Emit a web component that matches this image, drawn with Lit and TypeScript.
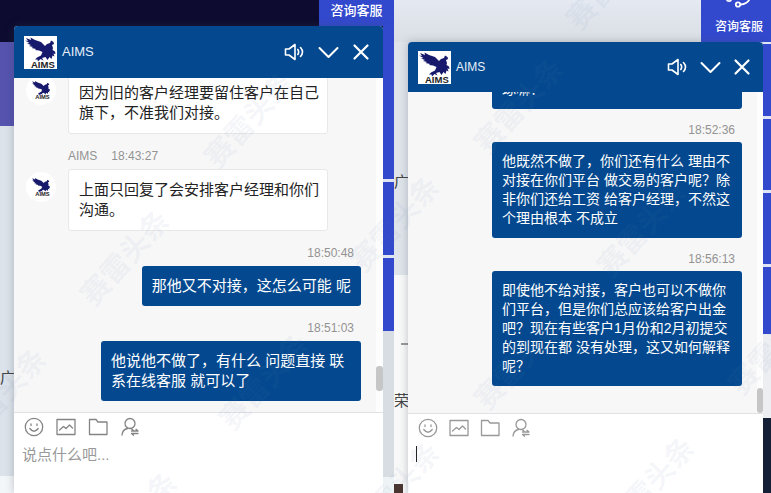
import { LitElement, html, css, svg, nothing } from "lit";
import { customElement, property } from "lit/decorators.js";
import { classMap } from "lit/directives/class-map.js";

interface Message {
  from: "agent" | "visitor";
  text: string;
  time?: string;
}

const leftChat: Message[] = [
  { from: "agent", text: "因为旧的客户经理要留住客户在自己\n旗下，不准我们对接。" },
  { from: "agent", time: "18:43:27", text: "上面只回复了会安排客户经理和你们\n沟通。" },
  { from: "visitor", time: "18:50:48", text: "那他又不对接，这怎么可能 呢" },
  { from: "visitor", time: "18:51:03", text: "他说他不做了，有什么 问题直接 联\n系在线客服 就可以了" },
];

const rightChat: Message[] = [
  { from: "visitor", text: "琢嘛！" },
  {
    from: "visitor",
    time: "18:52:36",
    text: "他既然不做了，你们还有什么 理由不\n对接在你们平台 做交易的客户呢？除\n非你们还给工资 给客户经理，不然这\n个理由根本 不成立",
  },
  {
    from: "visitor",
    time: "18:56:13",
    text: "即使他不给对接，客户也可以不做你\n们平台，但是你们总应该给客户出金\n吧？现在有些客户1月份和2月初提交\n的到现在都 没有处理，这又如何解释\n呢？",
  },
];

/* Watermark centres as percentages of the page. */
const marks: [number, number][] = [
  [16, 52], [32, 24], [0, 80], [17, 105], [34, 77], [51, 45], [67, 21],
  [83, 46], [67, 73], [84, 98], [100, 70], [79, -4], [51, 99],
];

const logo = svg`
  <rect width="33" height="33" fill="#fff"/>
  <path fill="#171a6c" d="M1 4.500 4 5 2 2 7 4 6.500 1.500 11 4 17 6 21 10 23 8 26 7 27 4.500 29.500 6 30 8 28 9 29 12 28.500 14 31 15.500 31.500 18 29.500 17.500 30.500 20.500 28.500 19.500 27.500 23 25.500 21 23.500 24 21.500 21 18 22 19.500 24.500 16.500 23 14 25.500 13.500 23.500 11 23.500 13 21.500 17 19.500 18.500 16 15 14.500 11 14 12 13 7.500 12 9 11 5 10 7 9 3 7.500 5.500 7Z"/>
  <text x="7" y="32" font-family="Liberation Sans, sans-serif" font-weight="700" font-size="9.500" fill="#222">AIMS</text>`;

@customElement("chat-window")
export class ChatWindow extends LitElement {
  @property({ attribute: false }) messages: Message[] = [];
  @property({ type: Boolean, reflect: true }) compact = false;
  @property({ type: Boolean }) typing = false;

  static styles = css`
    :host {
      display: flex;
      flex-direction: column;
      min-width: 0;
      min-height: 0;
      font: 15px/20px "Liberation Sans", "Noto Sans CJK SC", sans-serif;
      color: #222;
      background: #fff;
      border-radius: 4px 4px 0 0;
      overflow: hidden;
      box-shadow: 0 0 8px rgba(60, 70, 90, 0.3);
    }
    :host([compact]) { font-size: 14px; line-height: 19px; }
    svg { display: block; fill: none; stroke-linecap: round; stroke-linejoin: round; }
    button {
      display: block;
      padding: 0;
      border: 0;
      background: none;
      color: inherit;
      font: inherit;
    }
    .header {
      flex: none;
      display: flex;
      align-items: center;
      box-sizing: border-box;
      height: 52px;
      padding: 0 13px 0 10px;
      background: #04498f;
      color: #fff;
    }
    :host([compact]) .header { height: 50px; padding-right: 12px; }
    .name { margin: 0 auto 0 5px; font-size: 13px; font-weight: 400; color: #e6effa; }
    :host([compact]) .name { font-size: 12px; }
    .tools { display: flex; align-items: center; gap: 13px; }
    :host([compact]) .tools { gap: 12px; }
    .body { flex: 1; min-height: 0; display: flex; background: #f7f7f7; }
    .list {
      flex: 1;
      min-width: 0;
      display: flex;
      flex-direction: column;
      justify-content: flex-end;
      overflow: hidden;
      padding: 0 15px 11px 12px;
    }
    :host([compact]) .list { padding-bottom: 27px; }
    .track {
      flex: none;
      width: 7px;
      display: flex;
      flex-direction: column;
      justify-content: flex-end;
      background: #fdfdfd;
      padding-bottom: 21px;
    }
    :host([compact]) .track { padding-bottom: 0; width: 6px; }
    .thumb { height: 25px; border-radius: 3px; background: #c6c6c6; }
    .message {
      flex: none;
      display: grid;
      grid-template-columns: 30px 1fr;
      column-gap: 12px;
      justify-items: start;
    }
    .message.visitor { display: flex; flex-direction: column; align-items: flex-end; }
    .stamp {
      grid-column: 2;
      display: flex;
      gap: 14px;
      padding: 14px 0 5px;
      font-size: 12px;
      line-height: 16px;
      color: #939393;
    }
    :host([compact]) .stamp { padding: 13px 0 4px; }
    .visitor .stamp,
    :host([compact]) .visitor .stamp { padding-right: 7px; }
    .avatar {
      grid-column: 1;
      box-sizing: border-box;
      width: 30px;
      height: 30px;
      margin-top: 3px;
      padding: 5px;
      border-radius: 50%;
      background: #fff;
    }
    .bubble {
      grid-column: 2;
      box-sizing: border-box;
      margin: 0;
      padding: 10px;
      border-radius: 3px;
      white-space: pre-wrap;
    }
    .agent .bubble { padding-right: 8px; background: #fff; border: 1px solid #e8e8e8; }
    .visitor .bubble { background: #04498f; color: #fff; }
    .bubble.wide { width: 260px; }
    :host([compact]) .bubble { width: 250px; }
    .footer {
      flex: none;
      box-sizing: border-box;
      height: 81px;
      padding: 4px 8px 0;
      border-top: 1px solid #dfe1e4;
    }
    :host([compact]) .footer { height: 80px; }
    .actions { display: flex; align-items: center; gap: 12px; padding: 0 2px; color: #848484; }
    :host([compact]) .actions { gap: 11px; color: #999; }
    .entry { display: flex; padding-top: 8px; }
    .caret { width: 1px; height: 16px; background: #222; }
    textarea {
      flex: 1;
      min-width: 0;
      height: 24px;
      padding: 0;
      border: 0;
      outline: 0;
      resize: none;
      background: none;
      color: #222;
      font: inherit;
    }
    textarea::placeholder { color: #999; }
  `;

  private bubble(m: Message) {
    const agent = m.from === "agent";
    return html`
      <div class=${classMap({ message: true, agent, visitor: !agent })}>
        ${m.time
          ? html`<div class="stamp">${agent ? html`<span>AIMS</span>` : nothing}<time>${m.time}</time></div>`
          : nothing}
        ${agent
          ? html`<div class="avatar"><svg viewBox="0 0 33 33" width="20" height="20" role="img" aria-label="AIMS">${logo}</svg></div>`
          : nothing}
        <p class=${classMap({ bubble: true, wide: m.text.includes("\n") })}>${m.text}</p>
      </div>`;
  }

  render() {
    return html`
      <header class="header">
        <svg viewBox="0 0 33 33" width="33" height="33" role="img" aria-label="AIMS">${logo}</svg>
        <h2 class="name">AIMS</h2>
        <div class="tools">
          <button aria-label="声音">
            <svg width="21" height="20" viewBox="0 0 21 20" stroke="currentColor" stroke-width="1.6">
              <path d="M1.500 7H5L11 2.500V17.500L5 13H1.500Z"/>
              <path d="M13.800 7.500Q15.500 10 13.800 12.500M16.500 5.500Q20.500 10 16.500 14.500"/>
            </svg>
          </button>
          <button aria-label="最小化">
            <svg width="21" height="20" viewBox="0 0 21 20" stroke="currentColor" stroke-width="2">
              <path d="M1.500 6 10.500 15 19.500 6"/>
            </svg>
          </button>
          <button aria-label="关闭">
            <svg width="18" height="20" viewBox="0 0 18 20" stroke="currentColor" stroke-width="2.200">
              <path d="M2.500 3.500 15.500 16.500M15.500 3.500 2.500 16.500"/>
            </svg>
          </button>
        </div>
      </header>
      <div class="body">
        <div class="list">${this.messages.map((m) => this.bubble(m))}</div>
        <div class="track"><div class="thumb"></div></div>
      </div>
      <footer class="footer">
        <div class="actions">
          <button aria-label="表情">
            <svg width="20" height="20" viewBox="0 0 20 20" stroke="currentColor" stroke-width="1.300">
              <circle cx="10" cy="10" r="8.700"/>
              <path d="M5.800 11.500Q10 17 14.200 11.500M7 7V8.500M13 7V8.500"/>
            </svg>
          </button>
          <button aria-label="图片">
            <svg width="20" height="20" viewBox="0 0 20 20" stroke="currentColor" stroke-width="1.300">
              <rect x="1" y="2.500" width="18" height="15"/>
              <path d="M3.500 13 7.500 9.500 10 11.500 13.500 8 16.500 11"/>
            </svg>
          </button>
          <button aria-label="文件">
            <svg width="20" height="20" viewBox="0 0 20 20" stroke="currentColor" stroke-width="1.300">
              <path d="M1.500 17.500V2.500H8L10 5H19V17.500Z"/>
            </svg>
          </button>
          <button aria-label="转人工">
            <svg width="20" height="20" viewBox="0 0 20 20" stroke="currentColor" stroke-width="1.300">
              <circle cx="10" cy="6.500" r="5"/>
              <path d="M2 18Q2.500 12.500 7.500 11.500M11 11.500 13 13M11.500 14H18L16 12.300M18 16.500H11.500L13.500 18.200"/>
            </svg>
          </button>
        </div>
        <div class="entry">
          ${this.typing ? html`<span class="caret"></span>` : nothing}
          <textarea aria-label="消息" placeholder=${this.typing ? "" : "说点什么吧..."}></textarea>
        </div>
      </footer>`;
  }
}

@customElement("app-root")
export class AppRoot extends LitElement {
  static styles = css`
    :host {
      display: grid;
      grid-template-columns: 394fr 377fr;
      height: 100vh;
      position: relative;
      overflow: hidden;
      font: 15px/20px "Liberation Sans", "Noto Sans CJK SC", sans-serif;
      color: #444;
    }
    .scene { display: grid; min-width: 0; min-height: 0; }
    .first {
      grid-template: 26px minmax(0, 1fr) / 14px minmax(0, 1fr) 11px;
      background: #0d0c30;
    }
    .second {
      grid-template: 42px minmax(0, 1fr) / 14px minmax(0, 1fr) 8px;
      background: linear-gradient(#e4e9f2, #dadfe5 42px);
    }
    .consult {
      grid-column: 2 / -1;
      justify-self: end;
      display: flex;
      flex-direction: column;
      align-items: center;
      justify-content: flex-end;
      box-sizing: border-box;
      width: 75px;
      padding: 0 0 6px;
      border: 0;
      background: #3349cd;
      color: #fff;
      font: 500 13px/20px "Noto Sans CJK SC", sans-serif;
      overflow: hidden;
    }
    .second .consult { width: 70px; font-size: 12px; padding-left: 6px; }
    .consult svg { flex: none; display: block; margin-bottom: 8px; }
    .edge { display: flex; flex-direction: column; justify-content: flex-end; overflow: hidden; }
    .first .left {
      justify-content: flex-start;
      background: linear-gradient(#0d0c30 16px, #5553ae 16px 100px, #dce2e9 100px 450px, #f3f6f8 450px);
    }
    .second .left {
      justify-content: flex-start;
      background: linear-gradient(#dfe4ea 233px, #f8f8f8 233px);
    }
    .glyph { height: 20px; overflow: hidden; }
    .first .glyph { margin-top: 342px; }
    .top { margin-top: 130px; height: 18px; }
    .dash { width: 7px; height: 2px; margin: 153px 0 0 7px; background: #999; }
    .honor { margin-top: 46px; }
    .photo { width: 9px; height: 9px; margin-top: auto; background: #49342f; }
    .rail {
      display: grid;
      align-content: start;
      gap: 3px;
    }
    .rail a { background: #3349cd; }
    .first .rail {
      grid-template-rows: 153px 73px 73px;
      background: linear-gradient(#dfe5f1 304px, #d8dde3 304px 451px, #eef4f6 451px);
    }
    .second .rail {
      grid-template-rows: 72px 71px 71px 67px;
      padding-top: 2px;
      background: linear-gradient(#dfe4f7 292px, #eceef1 292px 376px, #151f35 376px);
    }
    .mark {
      position: absolute;
      transform: translate(-50%, -50%) rotate(-48deg);
      font: 700 29px/32px "Noto Sans CJK SC", sans-serif;
      color: rgba(95, 125, 170, 0.08);
      white-space: nowrap;
      pointer-events: none;
    }
  `;

  render() {
    return html`
      <section class="scene first">
        <button class="consult">咨询客服</button>
        <div class="edge left"><div class="glyph">广</div></div>
        <chat-window .messages=${leftChat}></chat-window>
        <nav class="rail" aria-label="侧栏"><a href="#a"></a><a href="#b"></a><a href="#c"></a></nav>
      </section>
      <section class="scene second">
        <button class="consult">
          <svg width="28" height="18" viewBox="0 0 28 18" fill="none" stroke="#fff" stroke-width="1.800">
            <circle cx="4" cy="9" r="2.200"/><circle cx="13" cy="14.500" r="2.200"/>
            <path d="M15.500 14.500Q23 14 25 8"/>
          </svg>
          咨询客服
        </button>
        <div class="edge left">
          <div class="glyph top">广</div>
          <div class="dash"></div>
          <div class="glyph honor">荣</div>
          <div class="photo"></div>
        </div>
        <chat-window compact typing .messages=${rightChat}></chat-window>
        <nav class="rail" aria-label="侧栏"><a href="#a"></a><a href="#b"></a><a href="#c"></a><a href="#d"></a></nav>
      </section>
      ${marks.map(([x, y]) => html`<span class="mark" aria-hidden="true" style="left:${x}%;top:${y}%">赛雷头条</span>`)}
    `;
  }
}
